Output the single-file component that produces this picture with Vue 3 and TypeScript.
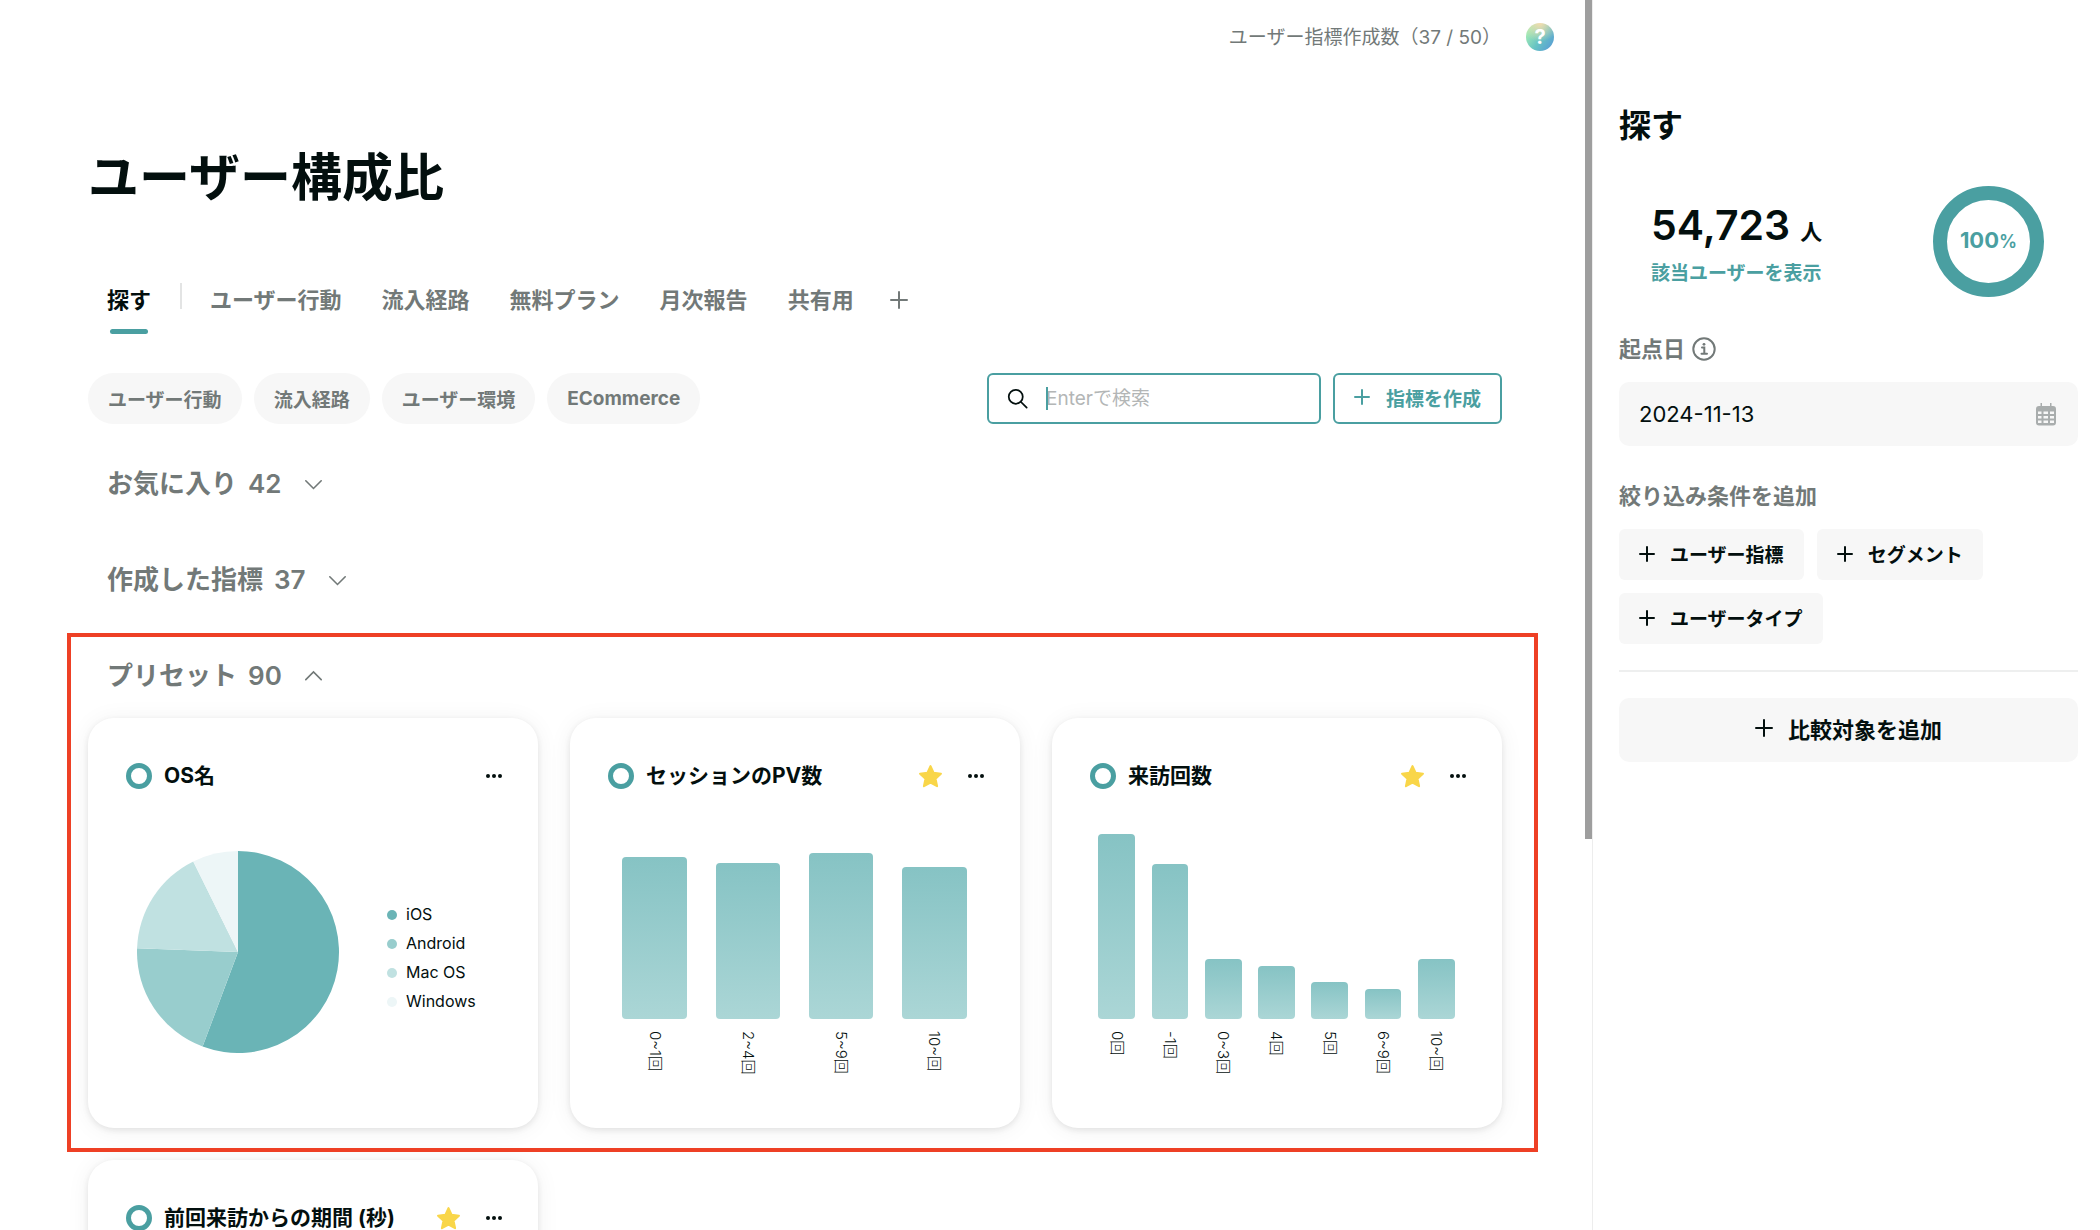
<script setup lang="ts">
import { ref } from 'vue'

interface Slice { name: string; value: number; color: string }
interface Bar { label: string; height: number }
interface Card { title: string; starred: boolean; slices?: Slice[]; bars?: Bar[] }

const query = ref('')
const baseDate = ref('2024-11-13')

const tabs = ['ユーザー行動', '流入経路', '無料プラン', '月次報告', '共有用']
const categories = ['ユーザー行動', '流入経路', 'ユーザー環境', 'ECommerce']
const closedGroups = [
  { name: 'お気に入り', count: 42 },
  { name: '作成した指標', count: 37 },
]
const conditions = ['ユーザー指標', 'セグメント', 'ユーザータイプ']

const cards: Card[] = [
  {
    title: 'OS名',
    starred: false,
    slices: [
      { name: 'iOS', value: 55.7, color: '#6ab4b6' },
      { name: 'Android', value: 19.9, color: '#98cdcd' },
      { name: 'Mac OS', value: 17.1, color: '#c0e1e1' },
      { name: 'Windows', value: 7.3, color: '#edf6f7' },
    ],
  },
  {
    title: 'セッションのPV数',
    starred: true,
    bars: [
      { label: '0~1回', height: 162 },
      { label: '2~4回', height: 156 },
      { label: '5~9回', height: 166 },
      { label: '10~回', height: 152 },
    ],
  },
  {
    title: '来訪回数',
    starred: true,
    bars: [
      { label: '0回', height: 185 },
      { label: '-1回', height: 155 },
      { label: '0~3回', height: 60 },
      { label: '4回', height: 53 },
      { label: '5回', height: 37 },
      { label: '6~9回', height: 30 },
      { label: '10~回', height: 60 },
    ],
  },
  { title: '前回来訪からの期間 (秒)', starred: true },
]

function slicePaths(slices: Slice[]) {
  let start = 0
  return slices.map((s) => {
    const end = start + s.value
    const point = (v: number) => {
      const a = (v / 100) * Math.PI * 2
      return `${100 + Math.sin(a) * 100} ${100 - Math.cos(a) * 100}`
    }
    const d = `M100 100 L${point(start)} A100 100 0 ${s.value > 50 ? 1 : 0} 1 ${point(end)} Z`
    start = end
    return { d, color: s.color }
  })
}
</script>

<template>
  <div class="app">
    <div class="pane">
      <main class="main">
        <div class="topbar">
          <span class="quota">ユーザー指標作成数（37 / 50）</span>
          <button class="help" type="button" aria-label="ヘルプ">?</button>
        </div>

        <div class="content">
          <h1>ユーザー構成比</h1>

          <nav class="tabs">
            <a class="tab active" href="#">探す</a>
            <span class="tab-divider"></span>
            <a v-for="t in tabs" :key="t" class="tab" href="#">{{ t }}</a>
            <button class="tab-add" type="button" aria-label="タブを追加">
              <svg viewBox="0 0 18 18" width="18" height="18"><path d="M9 1v16M1 9h16" /></svg>
            </button>
          </nav>

          <div class="filters">
            <button v-for="c in categories" :key="c" class="chip" type="button">{{ c }}</button>
            <label class="search">
              <svg viewBox="0 0 24 24" width="21" height="21"><circle cx="10" cy="10" r="8" /><path d="M16 16l6.500 6.500" /></svg>
              <span class="search-field">
                <input v-model="query" type="text" placeholder="Enterで検索" aria-label="検索" />
                <span class="caret"></span>
              </span>
            </label>
            <button class="create" type="button">
              <svg viewBox="0 0 16 16" width="16" height="16"><path d="M8 1v14M1 8h14" /></svg>
              指標を作成
            </button>
          </div>

          <section v-for="g in closedGroups" :key="g.name" class="group">
            <h2>
              <span>{{ g.name }}</span><span>{{ g.count }}</span>
              <svg viewBox="0 0 21 14" width="17" height="12"><path d="M1 3l9.500 9.500L20 3" /></svg>
            </h2>
          </section>

          <section class="group preset">
            <h2>
              <span>プリセット</span><span>90</span>
              <svg viewBox="0 0 21 14" width="17" height="12"><path d="M1 11.500L10.500 2 20 11.500" /></svg>
            </h2>
            <div class="cards">
              <article v-for="card in cards" :key="card.title" class="card">
                <header>
                  <span class="ring"></span>
                  <h3>{{ card.title }}</h3>
                  <svg v-if="card.starred" class="star" viewBox="0 0 24 24" width="25" height="25">
                    <path d="M12 2l3 6.500 7 .8-5.200 4.800 1.500 7.200L12 17.800l-6.300 3.500 1.500-7.200L2 9.300l7-.8z" />
                  </svg>
                  <button class="more" type="button" aria-label="メニュー">
                    <svg viewBox="0 0 16 4" width="16" height="4"><circle cx="2" cy="2" r="2" /><circle cx="8" cy="2" r="2" /><circle cx="14" cy="2" r="2" /></svg>
                  </button>
                </header>

                <div v-if="card.slices" class="pie">
                  <svg viewBox="0 0 200 200" width="202" height="202">
                    <path v-for="p in slicePaths(card.slices)" :key="p.color" :d="p.d" :fill="p.color" />
                  </svg>
                  <ul>
                    <li v-for="s in card.slices" :key="s.name">
                      <span class="dot" :style="{ background: s.color }"></span>{{ s.name }}
                    </li>
                  </ul>
                </div>

                <div v-if="card.bars" class="bars">
                  <div v-for="b in card.bars" :key="b.label" class="slot">
                    <div class="bar" :style="{ height: b.height + 'px' }"></div>
                    <div class="bar-label">{{ b.label }}</div>
                  </div>
                </div>
              </article>
            </div>
            <div class="highlight"></div>
          </section>
        </div>
      </main>
      <div class="scroll-thumb"></div>
    </div>

    <aside class="side">
      <h2>探す</h2>
      <div class="summary">
        <div class="total">
          <p><strong>54,723</strong><span>人</span></p>
          <a href="#">該当ユーザーを表示</a>
        </div>
        <div class="ratio"><span>100<small>%</small></span></div>
      </div>

      <label class="label" for="base-date">
        起点日
        <svg viewBox="0 0 24 24" width="24" height="24">
          <circle cx="12" cy="12" r="10.700" />
          <path d="M10 10.500h2.300v6M9.500 16.800h5.500" />
          <circle class="fill" cx="12" cy="7.300" r="1.400" />
        </svg>
      </label>
      <div class="date">
        <input id="base-date" v-model="baseDate" type="text" />
        <svg viewBox="0 0 20 23" width="20" height="23">
          <path fill-rule="evenodd" d="M3 3h1.500V0H6v3h8V0h1.500v3H17a3 3 0 0 1 3 3v13.500a3 3 0 0 1-3 3H3a3 3 0 0 1-3-3V6a3 3 0 0 1 3-3zM2 8.500v2.500h3.500V8.500zm5.500 0v2.500h4.500V8.500zm6.500 0v2.500h4V8.500zM2 13v2.500h3.500V13zm5.500 0v2.500h4.500V13zm6.500 0v2.500h4V13zM2 17.500v2.500h3.500v-2.500zm5.500 0v2.500h4.500v-2.500zm6.500 0v2.500h4v-2.500z" />
        </svg>
      </div>

      <p class="label conditions-label">絞り込み条件を追加</p>
      <div class="conditions">
        <button v-for="c in conditions" :key="c" type="button">
          <svg viewBox="0 0 16 16" width="16" height="16"><path d="M8 1v14M1 8h14" /></svg>{{ c }}
        </button>
      </div>
      <hr />
      <button class="compare" type="button">
        <svg viewBox="0 0 18 18" width="18" height="18"><path d="M9 1v16M1 9h16" /></svg>比較対象を追加
      </button>
    </aside>
  </div>
</template>

<style>
body {
  margin: 0;
  background: #fff;
}
</style>

<style scoped>
.app {
  display: grid;
  grid-template-columns: minmax(0, 1fr) 508px;
  height: 100vh;
  overflow: hidden;
  font-family: Inter, "Noto Sans CJK JP", sans-serif;
  color: #030f0e;
}
.app *,
.app *::before,
.app *::after {
  box-sizing: border-box;
}
h1, h2, h3, p, ul {
  margin: 0;
  padding: 0;
}
button, input {
  font: inherit;
  color: inherit;
  border: 0;
  padding: 0;
  background: none;
}
a {
  color: inherit;
  text-decoration: none;
}
svg {
  display: block;
  flex: none;
  fill: none;
  stroke: currentColor;
  stroke-width: 2;
  stroke-linecap: round;
}
.pane {
  position: relative;
  min-width: 0;
  overflow: hidden;
}
.scroll-thumb {
  position: absolute;
  top: 0;
  right: 0;
  width: 7px;
  height: 68.2%;
  background: #9e9e9e;
}
.topbar {
  display: flex;
  align-items: center;
  justify-content: flex-end;
  gap: 25px;
  height: 74px;
  padding-right: 38px;
  font-size: 19px;
  color: #727978;
}
.quota {
  padding-bottom: 3px;
}
.help {
  width: 28px;
  height: 28px;
  border-radius: 50%;
  background:
    radial-gradient(circle at 50% 0, #f5dcae 0%, rgba(245, 220, 174, 0) 60%),
    linear-gradient(125deg, #a4ecb4 15%, #66c3c4 55%, #5a9fd4 90%);
  color: #fff;
  font-size: 20px;
  font-weight: 700;
  line-height: 28px;
}
.content {
  padding: 72px 90px 0 88px;
}
h1 {
  font-size: 51px;
  line-height: 64px;
  font-weight: 700;
}
.tabs {
  display: flex;
  align-items: center;
  gap: 40px;
  height: 68px;
  margin-top: 56px;
  padding-left: 19px;
  font-size: 22px;
  font-weight: 700;
  color: #727978;
}
.tab {
  position: relative;
  line-height: 68px;
}
.tab.active {
  color: #030f0e;
}
.tab.active::after {
  content: "";
  position: absolute;
  left: 3px;
  right: 3px;
  bottom: 0;
  height: 5px;
  border-radius: 3px;
  background: #4a9fa1;
}
.tab-divider {
  width: 2px;
  height: 26px;
  margin: 0 -12px 8px -11px;
  background: #e3e4e4;
}
.tab-add {
  margin-left: -4px;
}
.filters {
  display: flex;
  gap: 12px;
  height: 51px;
  margin-top: 39px;
  font-size: 19px;
  font-weight: 700;
}
.chip {
  padding: 0 20px;
  border-radius: 26px;
  background: #f7f7f7;
  color: #727978;
}
.search {
  display: flex;
  align-items: center;
  gap: 18px;
  width: 334px;
  margin-left: auto;
  padding: 0 18px;
  border: 2px solid #4a9fa1;
  border-radius: 6px;
}
.search svg {
  color: #030f0e;
}
.search-field {
  position: relative;
  flex: 1;
}
.search input {
  width: 100%;
  outline: none;
  font-weight: 400;
}
.search input::placeholder {
  color: #b3b6b6;
}
.caret {
  position: absolute;
  left: 0;
  top: 0;
  bottom: 0;
  width: 2px;
  background: #4a9fa1;
}
.create {
  display: flex;
  align-items: center;
  gap: 16px;
  padding: 0 19px 3px;
  border: 2px solid #4a9fa1;
  border-radius: 6px;
  color: #4a9fa1;
}
.group {
  margin-top: 64px;
}
.filters + .group {
  margin-top: 44px;
}
.group h2 {
  display: flex;
  align-items: center;
  gap: 11px;
  padding-left: 19px;
  font-size: 26px;
  line-height: 32px;
  font-weight: 600;
  color: #727978;
}
.group h2 svg {
  margin-left: 12px;
}
.preset {
  position: relative;
}
.cards {
  display: grid;
  grid-template-columns: repeat(3, minmax(0, 1fr));
  gap: 32px;
  margin-top: 26px;
}
.card {
  height: 410px;
  padding: 38px;
  border-radius: 26px;
  background: #fff;
  box-shadow: 0 2px 6px rgba(0, 0, 0, .09), 0 2px 24px rgba(0, 0, 0, .06);
}
.card header {
  display: flex;
  align-items: center;
  height: 40px;
  margin-right: -2px;
}
.ring {
  width: 26px;
  height: 26px;
  border: 5px solid #4a9fa1;
  border-radius: 50%;
}
.card h3 {
  flex: 1;
  margin-left: 12px;
  font-size: 21px;
  line-height: 32px;
  font-weight: 700;
}
.star {
  margin-right: 25px;
  fill: #f9d649;
  stroke: #f9d649;
  stroke-linejoin: round;
}
.more svg {
  fill: currentColor;
  stroke: none;
}
.pie {
  display: flex;
  align-items: center;
  gap: 48px;
  height: 312px;
  padding-left: 11px;
}
.pie svg {
  stroke: none;
}
.pie ul {
  list-style: none;
  margin-top: 12px;
  font-size: 16px;
  line-height: 29px;
}
.pie li {
  display: flex;
  align-items: center;
  gap: 9px;
}
.dot {
  width: 10px;
  height: 10px;
  border-radius: 50%;
}
.bars {
  display: flex;
  height: 290px;
  padding: 38px 1px 0 0;
}
.slot {
  display: flex;
  flex: 1;
  flex-direction: column;
  align-items: center;
}
.bar {
  width: 69%;
  margin-top: auto;
  border-radius: 4px;
  background: linear-gradient(#86c3c4, #abd6d6);
}
.bar-label {
  height: 67px;
  padding-top: 12px;
  writing-mode: vertical-rl;
  text-orientation: sideways;
  font-size: 15px;
  line-height: 20px;
  font-weight: 300;
}
.highlight {
  position: absolute;
  top: -27px;
  left: -21px;
  right: -36px;
  height: 519px;
  border: 4px solid #ee4025;
  pointer-events: none;
}
.side {
  padding: 102px 22px 0 26px;
  border-left: 1px solid #ededed;
}
.side h2 {
  font-size: 32px;
  line-height: 48px;
}
.summary {
  display: flex;
  align-items: center;
  justify-content: space-between;
  height: 111px;
  margin-top: 36px;
  padding: 0 34px 0 32px;
}
.total {
  padding-top: 6px;
}
.total p {
  display: flex;
  align-items: baseline;
  gap: 10px;
  margin-bottom: 4px;
  line-height: 48px;
  font-size: 22px;
  font-weight: 700;
}
.total strong {
  font-size: 41px;
  font-weight: 600;
}
.total a {
  display: block;
  font-size: 19px;
  line-height: 28px;
  font-weight: 700;
  color: #4a9fa1;
}
.ratio {
  display: grid;
  place-items: center;
  width: 111px;
  height: 111px;
  padding-bottom: 4px;
  border: 14px solid #4a9fa1;
  border-radius: 50%;
  font-size: 22px;
  font-weight: 700;
  color: #4a9fa1;
}
.ratio small {
  font-size: 18px;
  font-weight: 600;
}
.label {
  display: flex;
  align-items: center;
  gap: 7px;
  margin-top: 36px;
  font-size: 22px;
  line-height: 32px;
  font-weight: 700;
  color: #727978;
}
.label .fill {
  fill: currentColor;
  stroke: none;
}
.date {
  display: flex;
  align-items: center;
  height: 64px;
  margin-top: 17px;
  padding: 0 22px 0 20px;
  border-radius: 10px;
  background: #f7f7f7;
}
.date input {
  flex: 1;
  min-width: 0;
  font-size: 22px;
}
.date svg {
  fill: #a9adad;
  stroke: none;
}
.conditions-label {
  margin-top: 34px;
}
.conditions {
  display: flex;
  flex-wrap: wrap;
  gap: 13px;
  margin-top: 17px;
}
.conditions button,
.compare {
  display: flex;
  align-items: center;
  justify-content: center;
  gap: 15px;
  height: 51px;
  padding: 0 20px 2px;
  border-radius: 6px;
  background: #f7f7f7;
  font-size: 19px;
  font-weight: 700;
}
hr {
  height: 2px;
  margin: 26px 0;
  border: 0;
  background: #eeefef;
}
.compare {
  width: 100%;
  height: 64px;
  padding-bottom: 4px;
  border-radius: 10px;
  font-size: 22px;
}
</style>
